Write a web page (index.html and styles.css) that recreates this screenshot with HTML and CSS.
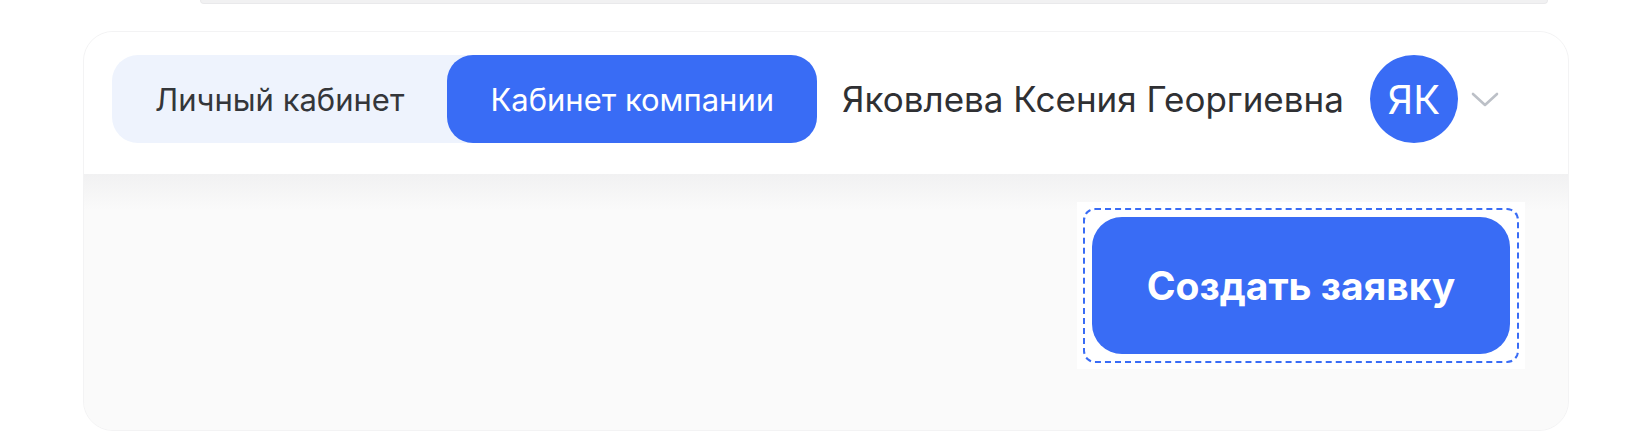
FILE: index.html
```html
<!DOCTYPE html>
<html lang="ru">
<head>
    <meta charset="UTF-8">
    <meta name="viewport" content="width=device-width, initial-scale=1.0">
    <title>Кабинет компании</title>
    <link rel="stylesheet" href="styles.css">
</head>
<body>
    <div class="prev-card"></div>

    <div class="card">
        <header class="topbar">
            <div class="switch">
                <button type="button" class="switch-item">Личный кабинет</button>
                <button type="button" class="switch-item active">Кабинет компании</button>
            </div>
            <span class="user-name">Яковлева Ксения Георгиевна</span>
            <span class="avatar">ЯК</span>
            <svg class="chevron" width="28" height="16" viewBox="0 0 28 16">
                <path d="M2 2 L14 13 L26 2" fill="none" stroke="#bcc0c7" stroke-width="2.6" stroke-linecap="round" stroke-linejoin="round"/>
            </svg>
        </header>

        <div class="content">
            <div class="focus-wrap">
                <div class="focus-ring">
                    <button type="button" class="create-btn">Создать заявку</button>
                </div>
            </div>
        </div>
    </div>
</body>
</html>
```

FILE: styles.css
```css
body {
    margin: 0;
    background-color: #ffffff;
    font-family: Inter, "Noto Sans", "Liberation Sans", sans-serif;
    color: #2f3033;
}
.prev-card {
    width: 1348px;
    height: 4px;
    margin-left: 200px;
    background-color: #f1f1f2;
    border: 1px solid #e9e9eb;
    border-top: none;
    border-radius: 0 0 16px 16px;
    box-sizing: border-box;
}
.card {
    width: 1486px;
    height: 400px;
    margin: 27px 0 0 83px;
    background-color: #fafafa;
    border: 1px solid #f3f3f4;
    border-radius: 30px;
    box-sizing: border-box;
    overflow: hidden;
    display: flex;
    flex-direction: column;
}
.topbar {
    height: 142px;
    padding: 23px 0 0 28px;
    box-sizing: border-box;
    background-color: #ffffff;
    display: flex;
    align-items: flex-start;
}
.switch {
    display: flex;
    height: 88px;
    background-color: #eef3fd;
    border-radius: 26px;
}
.switch-item {
    height: 88px;
    padding: 0 43px;
    border: none;
    background: none;
    font-family: inherit;
    font-size: 31px;
    color: #34363a;
    border-radius: 26px;
    cursor: pointer;
}
.switch-item.active {
    background-color: #396cf5;
    color: #ffffff;
}
.user-name {
    margin-left: 25px;
    line-height: 88px;
    font-size: 35px;
    color: #2f3033;
    white-space: nowrap;
}
.avatar {
    margin-left: 26px;
    width: 88px;
    height: 88px;
    border-radius: 50%;
    background-color: #396cf5;
    color: #ffffff;
    font-size: 40px;
    display: flex;
    align-items: center;
    justify-content: center;
}
.chevron {
    margin: 37px 0 0 13px;
}
.content {
    flex: 1;
    padding: 28px 43px 0 0;
    display: flex;
    justify-content: flex-end;
    align-items: flex-start;
    background: linear-gradient(#f1f1f2, #fafafa 36px);
}
.focus-wrap {
    padding: 6px;
    background-color: #ffffff;
}
.focus-ring {
    padding: 7px;
    border: 2px dashed #396cf5;
    border-radius: 12px;
}
.create-btn {
    display: block;
    width: 418px;
    height: 137px;
    border: none;
    border-radius: 30px;
    background-color: #396cf5;
    color: #ffffff;
    font-family: inherit;
    font-size: 39px;
    font-weight: 700;
    cursor: pointer;
}
```
